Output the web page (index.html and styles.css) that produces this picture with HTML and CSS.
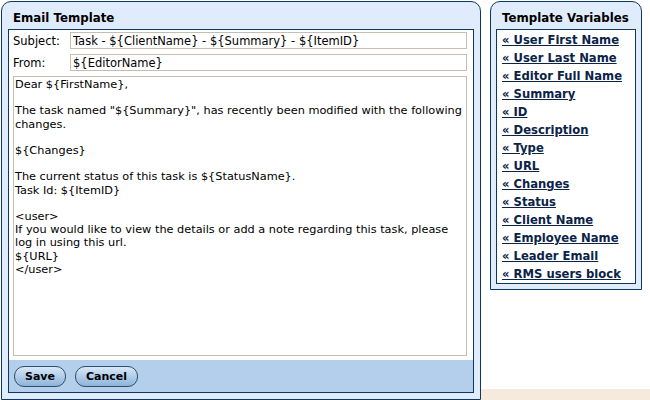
FILE: index.html
```html
<!DOCTYPE html>
<html lang="en">
<head>
    <meta charset="UTF-8">
    <title>Email Template</title>
    <link rel="stylesheet" href="styles.css">
</head>
<body>
    <div class="page">
        <div class="panel editor">
            <h2>Email Template</h2>
            <div class="box">
                <div class="fields">
                    <div class="row">
                        <label for="subject">Subject:</label>
                        <input type="text" id="subject" value="Task - ${ClientName} - ${Summary} - ${ItemID}">
                    </div>
                    <div class="row">
                        <label for="from">From:</label>
                        <input type="text" id="from" value="${EditorName}">
                    </div>
                    <textarea id="body">Dear ${FirstName},

The task named "${Summary}", has recently been modified with the following changes.

${Changes}

The current status of this task is ${StatusName}.
Task Id: ${ItemID}

&lt;user&gt;
If you would like to view the details or add a note regarding this task, please log in using this url.
${URL}
&lt;/user&gt;</textarea>
                </div>
                <div class="buttons">
                    <button type="button">Save</button>
                    <button type="button">Cancel</button>
                </div>
            </div>
        </div>
        <div class="side">
            <div class="panel vars">
                <h2>Template Variables</h2>
                <div class="box">
                    <a href="#">&laquo; User First Name</a>
                    <a href="#">&laquo; User Last Name</a>
                    <a href="#">&laquo; Editor Full Name</a>
                    <a href="#">&laquo; Summary</a>
                    <a href="#">&laquo; ID</a>
                    <a href="#">&laquo; Description</a>
                    <a href="#">&laquo; Type</a>
                    <a href="#">&laquo; URL</a>
                    <a href="#">&laquo; Changes</a>
                    <a href="#">&laquo; Status</a>
                    <a href="#">&laquo; Client Name</a>
                    <a href="#">&laquo; Employee Name</a>
                    <a href="#">&laquo; Leader Email</a>
                    <a href="#">&laquo; RMS users block</a>
                </div>
            </div>
            <div class="footer"></div>
        </div>
    </div>
</body>
</html>
```

FILE: styles.css
```css
body {
    margin: 0;
    font-family: "DejaVu Sans", Verdana, sans-serif;
    font-size: 11.5px;
    color: #000;
    background: #fff;
}
.page {
    display: flex;
    height: 400px;
    overflow: hidden;
}
.panel {
    background: #e0ecfb;
    border: 1px solid #0c3a5e;
    border-radius: 10px 10px 0 0;
}
.panel h2 {
    margin: 0;
    height: 27px;
    line-height: 33px;
    font-size: 11.8px;
    font-weight: bold;
    color: #000;
}
.editor {
    margin: 1px 0 0 1px;
    width: 466px;
    height: 397px;
    padding: 0 6px 0 6px;
    display: flex;
    flex-direction: column;
}
.editor h2 {
    padding-left: 5px;
}
.editor .box {
    flex: 1;
    margin-bottom: 6px;
    background: #fff;
    border: 1px solid #0c3a5e;
    display: flex;
    flex-direction: column;
}
.fields {
    flex: 1;
    display: flex;
    flex-direction: column;
    gap: 5px;
    padding: 2px 6px 4px 4px;
}
.row {
    display: flex;
    align-items: center;
}
.row label {
    width: 57px;
}
.row input, textarea {
    font-family: "DejaVu Sans", Verdana, sans-serif;
    font-size: 11.5px;
    border: 1px solid #c8bdb1;
    margin: 0;
    color: #000;
}
.row input {
    flex: 1;
    height: 17px;
    box-sizing: border-box;
    padding: 0 2px;
}
textarea {
    flex: 1;
    resize: none;
    padding: 1px 0 1px 1px;
    font-size: 11.3px;
    line-height: 13.2px;
    outline: none;
}
.buttons {
    height: 32px;
    background: #b3cfeb;
    display: flex;
    align-items: center;
    gap: 9px;
    padding: 0 5px;
}
.buttons button {
    height: 21px;
    padding: 0 10px;
    font-family: "DejaVu Sans", Verdana, sans-serif;
    font-size: 11px;
    font-weight: bold;
    color: #000;
    border: 1px solid #2d4e6c;
    border-radius: 10px;
    background: linear-gradient(#d9e8f6, #a9c8e6 60%, #8fb4d9);
    cursor: pointer;
}
.side {
    flex: 1;
    display: flex;
    flex-direction: column;
    padding-left: 9px;
}
.vars {
    margin-top: 1px;
    width: 140px;
    height: 287px;
    padding: 0 5px 0 5px;
}
.vars h2 {
    padding-left: 6px;
}
.vars .box {
    background: #fff;
    border: 1px solid #0c3a5e;
    height: 252px;
    padding: 1px 0 0 5px;
}
.vars a {
    display: block;
    height: 18px;
    line-height: 18px;
    font-weight: bold;
    font-size: 11.6px;
    color: #0b2347;
    text-decoration: underline;
}
.footer {
    margin-top: auto;
    margin-left: -9px;
    height: 11px;
    background: #f5eadb;
}
```
